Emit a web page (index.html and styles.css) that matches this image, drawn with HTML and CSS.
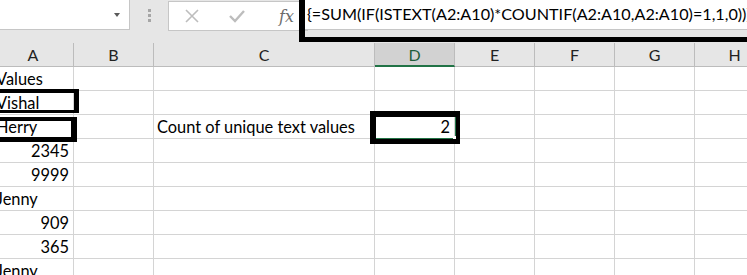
FILE: index.html
```html
<!DOCTYPE html>
<html lang="en">
<head>
    <meta charset="UTF-8">
    <title>Count unique text values</title>
    <link rel="stylesheet" href="styles.css">
</head>
<body>
    <!-- formula bar -->
    <div class="formula-bar">
        <div class="name-box">
            <span class="name-arrow"></span>
        </div>
        <div class="grip">
            <span></span><span></span><span></span>
        </div>
        <div class="func-box">
            <svg class="fb-icon" width="14" height="14" viewBox="0 0 14 14">
                <path d="M1 1 L13 13 M13 1 L1 13" stroke="#bdbdbd" stroke-width="1.6" fill="none"/>
            </svg>
            <svg class="fb-icon" width="16" height="14" viewBox="0 0 16 14">
                <path d="M1 7 L6 12 L15 2" stroke="#bdbdbd" stroke-width="2.4" fill="none"/>
            </svg>
            <span class="fx">fx</span>
        </div>
        <div class="formula-input">{=SUM(IF(ISTEXT(A2:A10)*COUNTIF(A2:A10,A2:A10)=1,1,0))}</div>
    </div>

    <!-- sheet grid -->
    <div class="sheet">
        <div class="hd">A</div>
        <div class="hd">B</div>
        <div class="hd">C</div>
        <div class="hd hd-active">D</div>
        <div class="hd">E</div>
        <div class="hd">F</div>
        <div class="hd">G</div>
        <div class="hd">H</div>

        <div class="c">Values</div><div class="c"></div><div class="c"></div><div class="c"></div><div class="c"></div><div class="c"></div><div class="c"></div><div class="c"></div>
        <div class="c">Vishal</div><div class="c"></div><div class="c"></div><div class="c"></div><div class="c"></div><div class="c"></div><div class="c"></div><div class="c"></div>
        <div class="c">Herry</div><div class="c"></div><div class="c">Count of unique text values</div><div class="c num">2</div><div class="c"></div><div class="c"></div><div class="c"></div><div class="c"></div>
        <div class="c num">2345</div><div class="c"></div><div class="c"></div><div class="c"></div><div class="c"></div><div class="c"></div><div class="c"></div><div class="c"></div>
        <div class="c num">9999</div><div class="c"></div><div class="c"></div><div class="c"></div><div class="c"></div><div class="c"></div><div class="c"></div><div class="c"></div>
        <div class="c">Jenny</div><div class="c"></div><div class="c"></div><div class="c"></div><div class="c"></div><div class="c"></div><div class="c"></div><div class="c"></div>
        <div class="c num">909</div><div class="c"></div><div class="c"></div><div class="c"></div><div class="c"></div><div class="c"></div><div class="c"></div><div class="c"></div>
        <div class="c num">365</div><div class="c"></div><div class="c"></div><div class="c"></div><div class="c"></div><div class="c"></div><div class="c"></div><div class="c"></div>
        <div class="c">Jenny</div><div class="c"></div><div class="c"></div><div class="c"></div><div class="c"></div><div class="c"></div><div class="c"></div><div class="c"></div>
    </div>

    <!-- selection + hand drawn markers -->
    <div class="selection"><span class="handle"></span></div>
    <div class="mark mark-formula"></div>
    <div class="mark mark-vishal"></div>
    <div class="mark mark-herry"></div>
    <div class="mark mark-result"></div>
</body>
</html>
```

FILE: styles.css
```css
:root {
    --bar-bg: #e6e6e6;
    --grid-line: #d4d4d4;
    --head-line: #c6c6c6;
    --excel-green: #217346;
    --text-color: #000;
}

* {
    box-sizing: border-box;
    margin: 0;
    padding: 0;
}

html, body {
    width: 747px;
    height: 275px;
    overflow: hidden;
}

body {
    position: relative;
    font-family: Lato, "Liberation Sans", sans-serif;
    font-size: 16.4px;
    color: var(--text-color);
    background-color: #fff;
}

/* formula bar */
.formula-bar {
    height: 43px;
    background-color: var(--bar-bg);
    display: flex;
    align-items: flex-start;
}

.name-box {
    width: 130px;
    height: 30px;
    background-color: #fff;
    border: 1px solid var(--head-line);
    border-left: none;
    border-top: none;
    position: relative;
}

.name-arrow {
    position: absolute;
    left: 114px;
    top: 13px;
    border-left: 3.5px solid transparent;
    border-right: 3.5px solid transparent;
    border-top: 4px solid #5a5a5a;
}

.grip {
    width: 38px;
    height: 30px;
    display: flex;
    flex-direction: column;
    align-items: center;
    justify-content: center;
    gap: 2px;
}

.grip span {
    width: 3px;
    height: 3px;
    background-color: #a6a6a6;
}

.func-box {
    width: 140px;
    height: 30px;
    margin-top: 1px;
    background-color: #fff;
    border: 1px solid var(--head-line);
    display: flex;
    align-items: center;
    padding-left: 16px;
    gap: 30px;
}

.fx {
    font-family: "DejaVu Serif", "Liberation Serif", serif;
    font-style: italic;
    font-size: 16px;
    color: #6b6b6b;
    margin-left: 4px;
}

.formula-input {
    flex: 1;
    height: 30px;
    margin-left: -9px;
    background-color: #fff;
    border-bottom: 1px solid var(--head-line);
    padding: 4px 0 0 8px;
    white-space: nowrap;
    overflow: hidden;
    font-size: 16.2px;
}

/* sheet */
.sheet {
    margin-left: -7px;
    display: grid;
    grid-template-columns: 81px 80px 221px 80px 80px 80px 80px 80px;
    grid-auto-rows: 24px;
}

.hd {
    background-color: var(--bar-bg);
    border-right: 1px solid #bcbcbc;
    border-bottom: 1px solid #bcbcbc;
    text-align: center;
    line-height: 23px;
    font-size: 16px;
    color: #222;
}

.hd-active {
    background-color: #d2d2d2;
    border-bottom: 2px solid var(--excel-green);
    color: #1f5e3a;
}

.c {
    border-right: 1px solid var(--grid-line);
    border-bottom: 1px solid var(--grid-line);
    padding: 0 3px;
    line-height: 23px;
    white-space: nowrap;
    overflow: visible;
}

.num {
    text-align: right;
    padding-right: 4px;
}

/* active cell */
.selection {
    position: absolute;
    left: 373px;
    top: 113px;
    width: 84px;
    height: 27px;
    border: 2px solid var(--excel-green);
}

.handle {
    position: absolute;
    right: -2px;
    bottom: -2px;
    width: 4px;
    height: 4px;
    background-color: #fff;
}

/* black marker rectangles */
.mark {
    position: absolute;
    border: 5px solid #000;
}

.mark-formula {
    left: 299px;
    top: -6px;
    width: 460px;
    height: 48px;
    border-width: 5px 0 5px 6px;
}

.mark-vishal {
    left: -6px;
    top: 89px;
    width: 85px;
    height: 24px;
    border-width: 4px 5px 3px 4px;
}

.mark-herry {
    left: -6px;
    top: 117px;
    width: 83px;
    height: 25px;
    border-width: 4px 6px 5px 4px;
}

.mark-result {
    left: 370px;
    top: 111px;
    width: 90px;
    height: 33px;
    border-width: 6px 4px 5px 6px;
}
```
